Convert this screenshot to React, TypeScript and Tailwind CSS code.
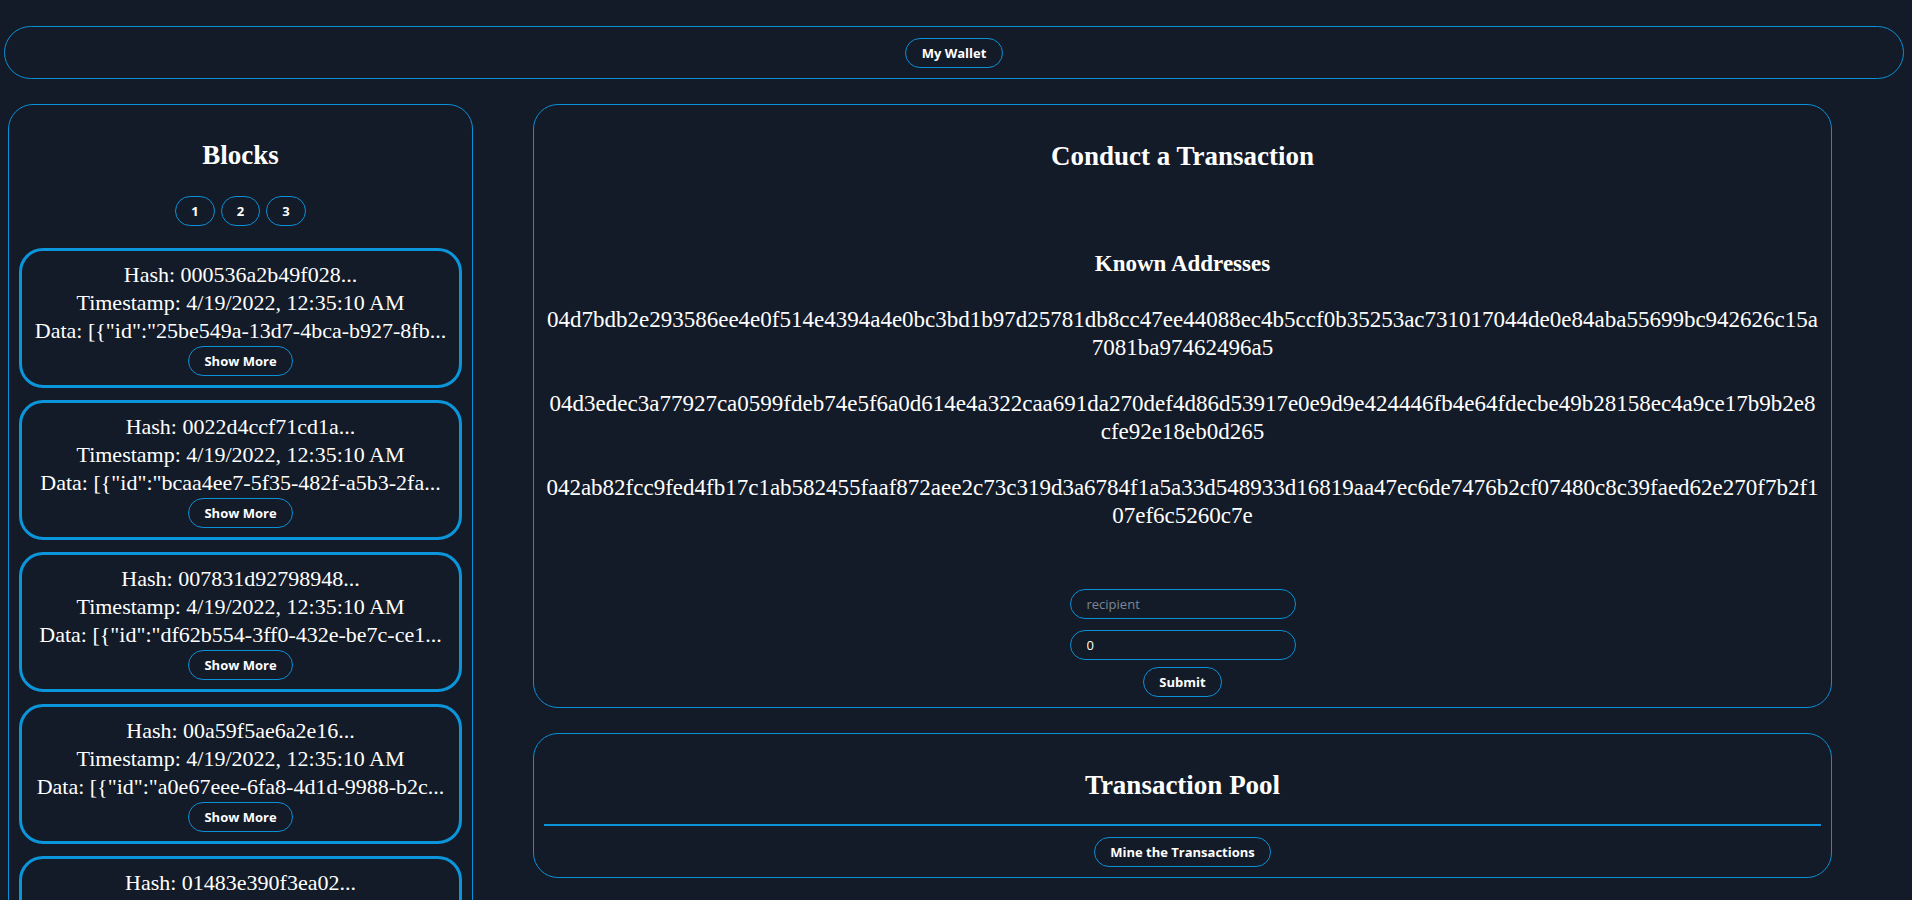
import React from 'react';

const serif = "font-['Liberation_Serif',serif]";
const sans = "font-['Open_Sans',sans-serif]";

interface Block {
  hash: string;
  timestamp: string;
  data: string;
}

const blocks: Block[] = [
  { hash: '000536a2b49f028...', timestamp: '4/19/2022, 12:35:10 AM', data: '[{"id":"25be549a-13d7-4bca-b927-8fb...' },
  { hash: '0022d4ccf71cd1a...', timestamp: '4/19/2022, 12:35:10 AM', data: '[{"id":"bcaa4ee7-5f35-482f-a5b3-2fa...' },
  { hash: '007831d92798948...', timestamp: '4/19/2022, 12:35:10 AM', data: '[{"id":"df62b554-3ff0-432e-be7c-ce1...' },
  { hash: '00a59f5ae6a2e16...', timestamp: '4/19/2022, 12:35:10 AM', data: '[{"id":"a0e67eee-6fa8-4d1d-9988-b2c...' },
  { hash: '01483e390f3ea02...', timestamp: '4/19/2022, 12:35:10 AM', data: '[{"id":"7c3f12ab-91d4-4e0a-8b6f-3d2...' },
];

// addresses wrap at the same place as the original page
const addresses: [string, string][] = [
  [
    '04d7bdb2e293586ee4e0f514e4394a4e0bc3bd1b97d25781db8cc47ee44088ec4b5ccf0b35253ac731017044de0e84aba55699bc942626c15a',
    '7081ba97462496a5',
  ],
  [
    '04d3edec3a77927ca0599fdeb74e5f6a0d614e4a322caa691da270def4d86d53917e0e9d9e424446fb4e64fdecbe49b28158ec4a9ce17b9b2e8',
    'cfe92e18eb0d265',
  ],
  [
    '042ab82fcc9fed4fb17c1ab582455faaf872aee2c73c319d3a6784f1a5a33d548933d16819aa47ec6de7476b2cf07480c8c39faed62e270f7b2f1',
    '07ef6c5260c7e',
  ],
];

function Pill({ children, className = '' }: { children: React.ReactNode; className?: string }) {
  return (
    <button
      className={`rounded-full border border-[#0b8fd6] bg-transparent px-[15px] py-[5px] text-[13px] leading-[18px] font-bold text-white ${sans} ${className}`}
    >
      {children}
    </button>
  );
}

function BlockCard({ block }: { block: Block }) {
  return (
    <div className="flex flex-col items-center rounded-[24px] border-[3px] border-[#0b96dc] pt-[10px] pb-[9px] text-[22px] leading-[28px]">
      <div className="whitespace-nowrap">Hash: {block.hash}</div>
      <div className="whitespace-nowrap">Timestamp: {block.timestamp}</div>
      <div className="whitespace-nowrap">Data: {block.data}</div>
      <Pill className="mt-[1px]">Show More</Pill>
    </div>
  );
}

export default function App() {
  return (
    <div
      className={`h-screen overflow-y-auto bg-[#131b28] text-white ${serif} [&::-webkit-scrollbar]:w-2 [&::-webkit-scrollbar-track]:bg-[#272c34] [&::-webkit-scrollbar-thumb]:bg-[#4b5058] [&::-webkit-scrollbar-thumb]:border-l-[3px] [&::-webkit-scrollbar-thumb]:border-solid [&::-webkit-scrollbar-thumb]:border-[#272c34]`}
    >
      <div className="pb-[14px]">
        <nav className="mt-[26px] ml-[4px] mr-[8px] flex h-[53px] items-center justify-center rounded-full border border-[#0b8fd6]">
          <Pill className="px-[16px]">My Wallet</Pill>
        </nav>

        <div className="mt-[25px] flex items-start gap-[60px] pl-[8px]">
          <section className="w-[465px] shrink-0 rounded-[25px] border border-[#0b8fd6] px-[10px] pt-[34px] pb-[10px]">
            <h2 className="text-center text-[27px] leading-[32px] font-bold">Blocks</h2>
            <div className="mt-[25px] flex justify-center gap-[6px]">
              <Pill>1</Pill>
              <Pill>2</Pill>
              <Pill>3</Pill>
            </div>
            <div className="mt-[22px] flex flex-col gap-[12px]">
              {blocks.map((b) => (
                <BlockCard key={b.hash} block={b} />
              ))}
            </div>
          </section>

          <div className="flex w-[1299px] shrink-0 flex-col gap-[25px]">
            <section className="flex flex-col items-center rounded-[25px] border border-[#0b8fd6] px-[15px] pt-[35px] pb-[10px]">
              <h2 className="text-[27px] leading-[32px] font-bold">Conduct a Transaction</h2>
              <h3 className="mt-[78px] text-[23px] leading-[28px] font-bold">Known Addresses</h3>
              <div className="mt-[28px] flex flex-col gap-[28px] text-center text-[23px] leading-[28px]">
                {addresses.map(([a, b]) => (
                  <p key={a} className="whitespace-nowrap">
                    {a}
                    <br />
                    {b}
                  </p>
                ))}
              </div>
              <input
                placeholder="recipient"
                className={`mt-[59px] h-[30px] w-[226px] rounded-full border border-[#0b8fd6] bg-transparent pl-[16px] text-[13px] text-white outline-none placeholder:text-[#7d8695] ${sans}`}
              />
              <input
                defaultValue="0"
                className={`mt-[11px] h-[30px] w-[226px] rounded-full border border-[#0b8fd6] bg-transparent pl-[16px] text-[13px] text-white outline-none ${sans}`}
              />
              <Pill className="mt-[7px]">Submit</Pill>
            </section>

            <section className="flex flex-col items-center rounded-[25px] border border-[#0b8fd6] px-[10px] pt-[35px] pb-[10px]">
              <h2 className="text-[27px] leading-[32px] font-bold">Transaction Pool</h2>
              <div className="mt-[23px] h-[2px] w-full bg-[#0b93da]" />
              <Pill className="mt-[11px]">Mine the Transactions</Pill>
            </section>
          </div>
        </div>
      </div>
    </div>
  );
}
